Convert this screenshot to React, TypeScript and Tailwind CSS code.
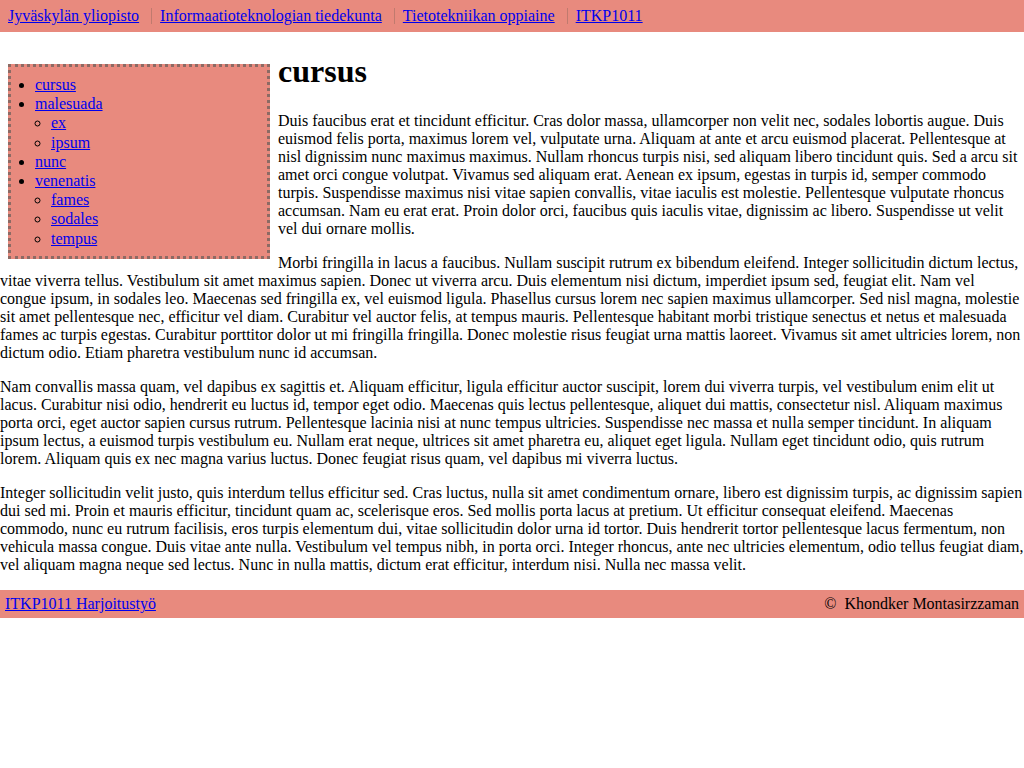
import React, { FC } from "react";

const crumbs: string[] = [
  "Jyväskylän yliopisto",
  "Informaatioteknologian tiedekunta",
  "Tietotekniikan oppiaine",
  "ITKP1011",
];

const paragraphs: string[] = [
  "Duis faucibus erat et tincidunt efficitur. Cras dolor massa, ullamcorper non velit nec, sodales lobortis augue. Duis euismod felis porta, maximus lorem vel, vulputate urna. Aliquam at ante et arcu euismod placerat. Pellentesque at nisl dignissim nunc maximus maximus. Nullam rhoncus turpis nisi, sed aliquam libero tincidunt quis. Sed a arcu sit amet orci congue volutpat. Vivamus sed aliquam erat. Aenean ex ipsum, egestas in turpis id, semper commodo turpis. Suspendisse maximus nisi vitae sapien convallis, vitae iaculis est molestie. Pellentesque vulputate rhoncus accumsan. Nam eu erat erat. Proin dolor orci, faucibus quis iaculis vitae, dignissim ac libero. Suspendisse ut velit vel dui ornare mollis.",
  "Morbi fringilla in lacus a faucibus. Nullam suscipit rutrum ex bibendum eleifend. Integer sollicitudin dictum lectus, vitae viverra tellus. Vestibulum sit amet maximus sapien. Donec ut viverra arcu. Duis elementum nisi dictum, imperdiet ipsum sed, feugiat elit. Nam vel congue ipsum, in sodales leo. Maecenas sed fringilla ex, vel euismod ligula. Phasellus cursus lorem nec sapien maximus ullamcorper. Sed nisl magna, molestie sit amet pellentesque nec, efficitur vel diam. Curabitur vel auctor felis, at tempus mauris. Pellentesque habitant morbi tristique senectus et netus et malesuada fames ac turpis egestas. Curabitur porttitor dolor ut mi fringilla fringilla. Donec molestie risus feugiat urna mattis laoreet. Vivamus sit amet ultricies lorem, non dictum odio. Etiam pharetra vestibulum nunc id accumsan.",
  "Nam convallis massa quam, vel dapibus ex sagittis et. Aliquam efficitur, ligula efficitur auctor suscipit, lorem dui viverra turpis, vel vestibulum enim elit ut lacus. Curabitur nisi odio, hendrerit eu luctus id, tempor eget odio. Maecenas quis lectus pellentesque, aliquet dui mattis, consectetur nisl. Aliquam maximus porta orci, eget auctor sapien cursus rutrum. Pellentesque lacinia nisi at nunc tempus ultricies. Suspendisse nec massa et nulla semper tincidunt. In aliquam ipsum lectus, a euismod turpis vestibulum eu. Nullam erat neque, ultrices sit amet pharetra eu, aliquet eget ligula. Nullam eget tincidunt odio, quis rutrum lorem. Aliquam quis ex nec magna varius luctus. Donec feugiat risus quam, vel dapibus mi viverra luctus.",
  "Integer sollicitudin velit justo, quis interdum tellus efficitur sed. Cras luctus, nulla sit amet condimentum ornare, libero est dignissim turpis, ac dignissim sapien dui sed mi. Proin et mauris efficitur, tincidunt quam ac, scelerisque eros. Sed mollis porta lacus at pretium. Ut efficitur consequat eleifend. Maecenas commodo, nunc eu rutrum facilisis, eros turpis elementum dui, vitae sollicitudin dolor urna id tortor. Duis hendrerit tortor pellentesque lacus fermentum, non vehicula massa congue. Duis vitae ante nulla. Vestibulum vel tempus nibh, in porta orci. Integer rhoncus, ante nec ultricies elementum, odio tellus feugiat diam, vel aliquam magna neque sed lectus. Nunc in nulla mattis, dictum erat efficitur, interdum nisi. Nulla nec massa velit.",
];

const linkCls = "text-[#0000ee] underline";

const Nav: FC = () => {
  return (
    <nav className="float-left w-[262px] mt-8 ml-2 mr-2 mb-2 bg-[#e88a7e] border-[3px] border-dotted border-[#8c6a64] py-2 leading-[1.2]">
      <ul className="list-disc pl-6 m-0">
        <li><a href="#" className={linkCls}>cursus</a></li>
        <li>
          <a href="#" className={linkCls}>malesuada</a>
          <ul className="list-[circle] pl-4">
            <li><a href="#" className={linkCls}>ex</a></li>
            <li><a href="#" className={linkCls}>ipsum</a></li>
          </ul>
        </li>
        <li><a href="#" className={linkCls}>nunc</a></li>
        <li>
          <a href="#" className={linkCls}>venenatis</a>
          <ul className="list-[circle] pl-4">
            <li><a href="#" className={linkCls}>fames</a></li>
            <li><a href="#" className={linkCls}>sodales</a></li>
            <li><a href="#" className={linkCls}>tempus</a></li>
          </ul>
        </li>
      </ul>
    </nav>
  );
};

const App: FC = () => {
  return (
    <div
      className="min-h-screen bg-white text-black text-base leading-[normal]"
      style={{ fontFamily: '"Liberation Serif", "Times New Roman", serif' }}
    >
      <header className="bg-[#e88a7e] h-8 flex items-center px-2">
        {crumbs.map((c, i) => (
          <div
            key={c}
            className={
              i === 0
                ? "flex items-center"
                : "flex items-center border-l border-[#c07a6e] pl-2 ml-3 h-4"
            }
          >
            <a href="#" className={linkCls}>{c}</a>
          </div>
        ))}
      </header>

      <main className="flow-root">
        <Nav />
        <h1 className="text-[32px] font-bold mt-[21.44px] mb-[21.44px] leading-[normal] text-wrap">cursus</h1>
        {paragraphs.map((p, i) => (
          <p key={i} className="mb-4 text-wrap">{p}</p>
        ))}
      </main>

      <footer className="bg-[#e88a7e] flex justify-between px-[5px] py-[5px]">
        <a href="#" className={linkCls}>ITKP1011 Harjoitustyö</a>
        <span>©&nbsp; Khondker Montasirzzaman</span>
      </footer>
    </div>
  );
};

export default App;
